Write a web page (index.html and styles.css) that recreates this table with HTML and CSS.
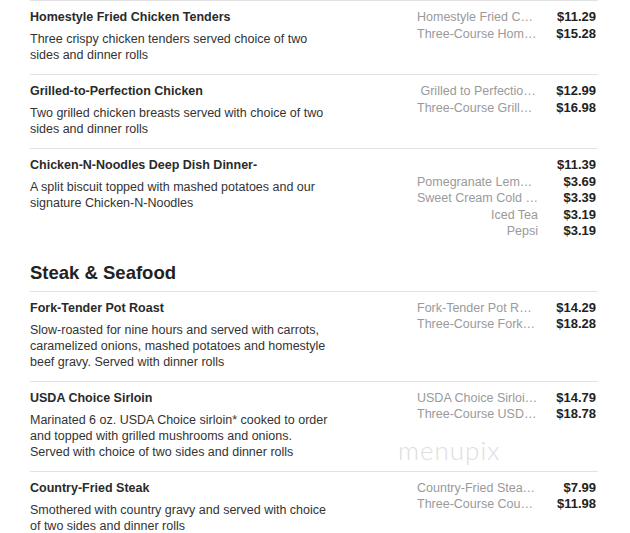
FILE: index.html
```html
<!DOCTYPE html>
<html>
<head>
<meta charset="utf-8">
<link rel="stylesheet" href="styles.css">
</head>
<body>
<div class="menu">
  <div class="item">
    <div class="info">
      <div class="name">Homestyle Fried Chicken Tenders</div>
      <div class="desc">Three crispy chicken tenders served choice of two sides and dinner rolls</div>
    </div>
    <div class="prices">
      <div class="row"><span class="opt">Homestyle Fried Chicken Tenders</span><span class="price">$11.29</span></div>
      <div class="row"><span class="opt">Three-Course Homestyle Fried Chicken Tenders</span><span class="price">$15.28</span></div>
    </div>
  </div>
  <div class="item">
    <div class="info">
      <div class="name">Grilled-to-Perfection Chicken</div>
      <div class="desc">Two grilled chicken breasts served with choice of two sides and dinner rolls</div>
    </div>
    <div class="prices">
      <div class="row"><span class="opt">&nbsp;Grilled to Perfection Chicken</span><span class="price">$12.99</span></div>
      <div class="row"><span class="opt">Three-Course Grilled-to-Perfection Chicken</span><span class="price">$16.98</span></div>
    </div>
  </div>
  <div class="item">
    <div class="info">
      <div class="name">Chicken-N-Noodles Deep Dish Dinner-</div>
      <div class="desc">A split biscuit topped with mashed potatoes and our signature Chicken-N-Noodles</div>
    </div>
    <div class="prices">
      <div class="row"><span class="opt"></span><span class="price">$11.39</span></div>
      <div class="row"><span class="opt">Pomegranate Lemonade</span><span class="price">$3.69</span></div>
      <div class="row"><span class="opt">Sweet Cream Cold Brew</span><span class="price">$3.39</span></div>
      <div class="row"><span class="opt">Iced Tea</span><span class="price">$3.19</span></div>
      <div class="row"><span class="opt">Pepsi</span><span class="price">$3.19</span></div>
    </div>
  </div>

  <h2 class="section">Steak &amp; Seafood</h2>

  <div class="item">
    <div class="info">
      <div class="name">Fork-Tender Pot Roast</div>
      <div class="desc">Slow-roasted for nine hours and served with carrots, caramelized onions, mashed potatoes and homestyle beef gravy. Served with dinner rolls</div>
    </div>
    <div class="prices">
      <div class="row"><span class="opt">Fork-Tender Pot Roast</span><span class="price">$14.29</span></div>
      <div class="row"><span class="opt">Three-Course Fork-Tender Pot Roast</span><span class="price">$18.28</span></div>
    </div>
  </div>
  <div class="item">
    <div class="info">
      <div class="name">USDA Choice Sirloin</div>
      <div class="desc">Marinated 6 oz. USDA Choice sirloin* cooked to order and topped with grilled mushrooms and onions. Served with choice of two sides and dinner rolls</div>
    </div>
    <div class="prices">
      <div class="row"><span class="opt">USDA Choice Sirloin Steak</span><span class="price">$14.79</span></div>
      <div class="row"><span class="opt">Three-Course USDA Choice Sirloin</span><span class="price">$18.78</span></div>
    </div>
  </div>
  <div class="item">
    <div class="info">
      <div class="name">Country-Fried Steak</div>
      <div class="desc">Smothered with country gravy and served with choice of two sides and dinner rolls</div>
    </div>
    <div class="prices">
      <div class="row"><span class="opt">Country-Fried Steak Dinner</span><span class="price">$7.99</span></div>
      <div class="row"><span class="opt">Three-Course Country-Fried Steak</span><span class="price">$11.98</span></div>
    </div>
  </div>
  <div class="watermark">menupix</div>
</div>
</body>
</html>
```
FILE: styles.css
```css
html, body {
  margin: 0;
  padding: 0;
  background: #fff;
}
body {
  font-family: "Liberation Sans", Arial, sans-serif;
  color: #222;
}
.menu {
  position: relative;
  margin-left: 30px;
  width: 568px;
}
.item {
  display: flex;
  justify-content: space-between;
  border-top: 1px solid #e2e2e2;
  padding: 8px 2px 11px 0;
}
.info {
  width: 300px;
}
.name {
  font-size: 12.5px;
  font-weight: bold;
  line-height: 16px;
  color: #2a2a2a;
}
.desc {
  margin-top: 6px;
  font-size: 12.5px;
  line-height: 16px;
  color: #333;
}
.prices {
  display: flex;
  flex-direction: column;
}
.row {
  display: flex;
  justify-content: flex-end;
  line-height: 16.5px;
  font-size: 12.5px;
}
.opt {
  width: 121px;
  text-align: right;
  white-space: nowrap;
  overflow: hidden;
  text-overflow: ellipsis;
  color: #9a9a9a;
}
.price {
  width: 58px;
  text-align: right;
  font-size: 13px;
  font-weight: bold;
  color: #222;
}
.section {
  margin: 10px 0 6px;
  font-size: 18.5px;
  line-height: 24px;
  font-weight: bold;
  color: #222;
}
.watermark {
  position: absolute;
  left: 368px;
  top: 434px;
  font-family: Lato, "DejaVu Sans", sans-serif;
  font-weight: 300;
  font-size: 26px;
  letter-spacing: 1px;
  color: #dedede;
}
```
